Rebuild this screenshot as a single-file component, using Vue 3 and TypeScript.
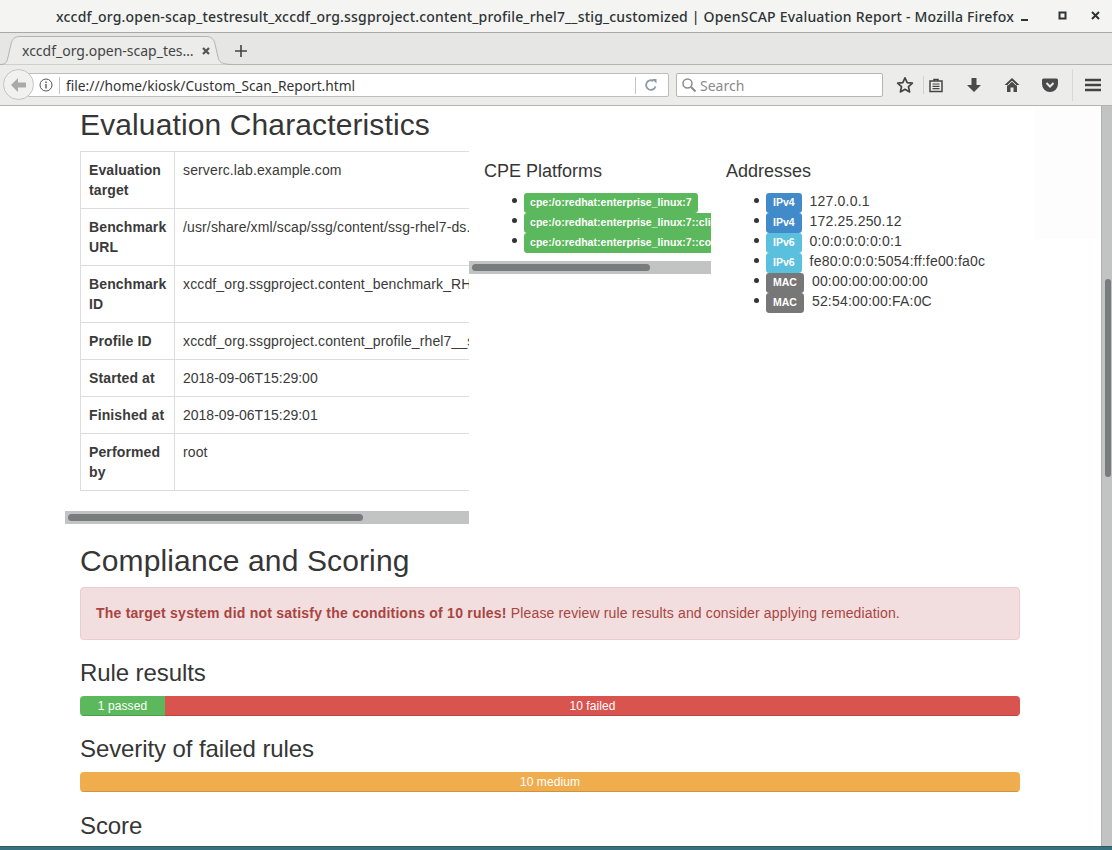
<script setup lang="ts">
interface Row { label: string; value: string; tight?: boolean }
interface Addr { kind: string; cls: string; value: string }
const rows: Row[] = [
  { label: 'Evaluation target', value: 'serverc.lab.example.com' },
  { label: 'Benchmark URL', value: '/usr/share/xml/scap/ssg/content/ssg-rhel7-ds.xml' },
  { label: 'Benchmark ID', value: 'xccdf_org.ssgproject.content_benchmark_RHEL-7' },
  { label: 'Profile ID', value: 'xccdf_org.ssgproject.content_profile_rhel7__stig_customized' },
  { label: 'Started at', value: '2018-09-06T15:29:00', tight: true },
  { label: 'Finished at', value: '2018-09-06T15:29:01', tight: true },
  { label: 'Performed by', value: 'root' },
]
const cpes: string[] = [
  'cpe:/o:redhat:enterprise_linux:7',
  'cpe:/o:redhat:enterprise_linux:7::client',
  'cpe:/o:redhat:enterprise_linux:7::computenode',
]
const addrs: Addr[] = [
  { kind: 'IPv4', cls: 'blue', value: '127.0.0.1' },
  { kind: 'IPv4', cls: 'blue', value: '172.25.250.12' },
  { kind: 'IPv6', cls: 'cyan', value: '0:0:0:0:0:0:0:1' },
  { kind: 'IPv6', cls: 'cyan', value: 'fe80:0:0:0:5054:ff:fe00:fa0c' },
  { kind: 'MAC', cls: 'gray', value: '00:00:00:00:00:00' },
  { kind: 'MAC', cls: 'gray', value: '52:54:00:00:FA:0C' },
]
</script>

<template>
  <div class="window">
    <header class="titlebar">
      <span class="title">xccdf_org.open-scap_testresult_xccdf_org.ssgproject.content_profile_rhel7__stig_customized | OpenSCAP Evaluation Report - Mozilla Firefox</span>
      <div class="winbtns">
        <svg width="12" height="12" viewBox="0 0 12 12"><rect x="2" y="9" width="7" height="2" fill="#2e3436" /></svg>
        <svg width="12" height="12" viewBox="0 0 12 12"><rect x="2.5" y="2.5" width="6" height="6" fill="none" stroke="#2e3436" stroke-width="2" /></svg>
        <svg width="12" height="12" viewBox="0 0 12 12"><path d="M2 2l7 7M9 2l-7 7" stroke="#2e3436" stroke-width="2" fill="none" /></svg>
      </div>
    </header>

    <div class="tabbar">
      <div class="tab">
        <svg class="tabshape" width="234" height="30" viewBox="0 0 234 30"><path d="M0 29.500C6 29.500 7 27 8 22L11 9C12 4 15 1.500 20 1.500H206C211 1.500 214 4 215 9L218 22C219 27 221 29.500 234 29.500" fill="#ececeb" stroke="#b3b3b0" stroke-width="1" /></svg>
        <span class="tabtext">xccdf_org.open-scap_tes…</span>
        <svg class="tabclose" width="10" height="10" viewBox="0 0 10 10"><path d="M2 2l6 6M8 2l-6 6" stroke="#555" stroke-width="2.2" fill="none" /></svg>
      </div>
      <svg class="plus" width="14" height="14" viewBox="0 0 14 14"><path d="M7 1v12M1 7h12" stroke="#444" stroke-width="1.6" fill="none" /></svg>
    </div>

    <nav class="navbar">
      <div class="back">
        <svg width="18" height="16" viewBox="0 0 18 16"><path d="M1 8l7-7v4.500h8v5H8V15z" fill="#a9abab" /></svg>
      </div>
      <div class="urlbar">
        <svg class="info" width="14" height="14" viewBox="0 0 14 14"><circle cx="7" cy="7" r="6" fill="none" stroke="#555" stroke-width="1" /><rect x="6.300" y="6" width="1.400" height="4.500" fill="#555" /><rect x="6.300" y="3.500" width="1.400" height="1.500" fill="#555" /></svg>
        <span class="sep"></span>
        <span class="url">file:///home/kiosk/Custom_Scan_Report.html</span>
        <span class="sep end"></span>
        <svg class="reload" width="14" height="14" viewBox="0 0 14 14"><path d="M11.500 8.500A4.800 4.800 0 1 1 9.500 3" fill="none" stroke="#8a9aa8" stroke-width="1.800" /><path d="M8 1h4.500v4.500z" fill="#8a9aa8" /></svg>
      </div>
      <div class="searchbar">
        <svg width="16" height="16" viewBox="0 0 16 16"><circle cx="6.500" cy="6.500" r="4.500" fill="none" stroke="#8b8b8b" stroke-width="1.500" /><path d="M10 10l4.500 4.500" stroke="#8b8b8b" stroke-width="2" /></svg>
        <span>Search</span>
      </div>
      <div class="tools">
        <svg class="t-star" width="18" height="18" viewBox="0 0 18 18"><path d="M9 1.800l2.200 4.800 5.200.6-3.900 3.500 1.100 5.200L9 13.300l-4.600 2.600 1.100-5.200L1.600 7.200l5.200-.6z" fill="none" stroke="#444" stroke-width="1.700" stroke-linejoin="round" /></svg>
        <span class="t-sep"></span>
        <svg class="t-list" width="16" height="16" viewBox="0 0 16 16"><path d="M2 4h12v10.500H2z" fill="none" stroke="#444" stroke-width="1.500" /><path d="M6 4V2.500h4V4" fill="none" stroke="#444" stroke-width="1.500" /><path d="M4.500 7h7M4.500 9.300h7M4.500 11.600h7" stroke="#444" stroke-width="1.200" /></svg>
        <svg class="t-down" width="16" height="16" viewBox="0 0 16 16"><path d="M5.500 1h5v7H15l-7 7-7-7h4.500z" fill="#4a4a4a" /></svg>
        <svg class="t-home" width="16" height="16" viewBox="0 0 16 16"><path d="M8 1L.5 8h2.500v7h3.500v-4.500h3V15H13V8h2.500z" fill="#4a4a4a" /><path d="M8 4.200L3.500 8.500M8 4.200l4.500 4.300" stroke="#e9e9e8" stroke-width="1" fill="none" /></svg>
        <svg class="t-pocket" width="18" height="16" viewBox="0 0 18 16"><path d="M2.500 1.500h13a1.500 1.500 0 0 1 1.500 1.500v4a8 8 0 0 1-16 0V3a1.500 1.500 0 0 1 1.500-1.500z" fill="#4a4a4a" /><path d="M5.500 6L9 9.500 12.500 6" fill="none" stroke="#e9e9e8" stroke-width="2" /></svg>
        <span class="t-sep2"></span>
        <svg class="t-menu" width="18" height="16" viewBox="0 0 18 16"><path d="M1 3h16M1 8h16M1 13h16" stroke="#444" stroke-width="2.400" /></svg>
      </div>
    </nav>

    <div class="viewport">
      <main class="page">
        <h2 class="h-eval">Evaluation Characteristics</h2>
        <div class="row">
          <section class="col-table">
            <div class="clip">
              <table class="info-table">
                <tbody>
                  <tr v-for="r in rows" :key="r.label">
                    <th>{{ r.label }}</th>
                    <td :class="{ tight: r.tight }">{{ r.value }}</td>
                  </tr>
                </tbody>
              </table>
            </div>
            <div class="hscroll"><div class="thumb thumb-a"></div></div>
          </section>

          <section class="col-cpe">
            <h4>CPE Platforms</h4>
            <div class="clip">
              <ul class="list cpe-list">
                <li v-for="c in cpes" :key="c"><span class="label green">{{ c }}</span></li>
              </ul>
            </div>
            <div class="hscroll"><div class="thumb thumb-b"></div></div>
          </section>

          <section class="col-addr">
            <h4>Addresses</h4>
            <ul class="list addr-list">
              <li v-for="(a, i) in addrs" :key="i">
                <span class="label" :class="a.cls">{{ a.kind }}</span>
                <span class="addr">{{ a.value }}</span>
              </li>
            </ul>
          </section>
        </div>

        <h2 class="h-comp">Compliance and Scoring</h2>
        <div class="alert"><strong>The target system did not satisfy the conditions of 10 rules!</strong> Please review rule results and consider applying remediation.</div>

        <h3>Rule results</h3>
        <div class="progress">
          <div class="bar bar-pass">1 passed</div>
          <div class="bar bar-fail">10 failed</div>
        </div>

        <h3>Severity of failed rules</h3>
        <div class="progress">
          <div class="bar bar-medium">10 medium</div>
        </div>

        <h3 class="h-score">Score</h3>
      </main>

      <div class="vscroll"><div class="vthumb"></div></div>
      <div class="ghost"></div>
    </div>
    <div class="desktop"></div>
  </div>
</template>

<style>
html, body { margin: 0; padding: 0; background: #fff; }
</style>

<style scoped>
.window {
  width: 1112px;
  height: 850px;
  display: flex;
  flex-direction: column;
  overflow: hidden;
  font-family: "Liberation Sans", Arial, sans-serif;
  color: #3a3a3a;
  background: #fff;
}
.titlebar {
  height: 33px;
  flex: none;
  box-sizing: border-box;
  border-bottom: 1px solid #a9a9a5;
  background: #f4f4f3;
  display: flex;
  align-items: center;
  padding-left: 56px;
  font-family: "Noto Sans", sans-serif;
  font-size: 14px;
  letter-spacing: .19px;
  font-weight: 500;
  color: #2e3436;
  white-space: nowrap;
  position: relative;
}
.winbtns { position: absolute; right: 0; top: 10px; display: flex; }
.winbtns svg:nth-child(1) { margin-right: 26px; }
.winbtns svg:nth-child(2) { margin-right: 21px; }
.winbtns svg:nth-child(3) { margin-right: 10px; }
.tabbar {
  height: 32px;
  flex: none;
  box-sizing: border-box;
  background: #e6e6e5;
  border-bottom: 1px solid #b3b3b0;
  display: flex;
  align-items: flex-end;
  font-family: "Noto Sans", sans-serif;
  position: relative;
}
.tab {
  width: 234px;
  height: 30px;
  margin-bottom: -1px;
  box-sizing: border-box;
  position: relative;
  display: flex;
  align-items: center;
  padding: 1px 23px 0 22px;
  justify-content: space-between;
  font-size: 14px;
  color: #444;
}
.tabshape { position: absolute; left: 0; top: 0; }
.tabtext { white-space: nowrap; position: relative; }
.tabclose { position: relative; }
.plus { margin: 0 0 6px 0; }
.navbar {
  height: 41px;
  flex: none;
  box-sizing: border-box;
  background: #ececeb;
  border-bottom: 1px solid #b3b3b0;
  display: flex;
  align-items: center;
  position: relative;
  padding-left: 28px;
  font-family: "Noto Sans", sans-serif;
}
.back {
  position: absolute;
  left: 3px;
  top: 4px;
  width: 31px;
  height: 31px;
  box-sizing: border-box;
  border: 1px solid #c4c4c2;
  border-radius: 50%;
  background: #f1f1f0;
  display: flex;
  align-items: center;
  justify-content: center;
  z-index: 1;
}
.urlbar {
  width: 641px;
  height: 24px;
  box-sizing: border-box;
  border: 1px solid #bdbdbb;
  border-radius: 0 2px 2px 0;
  background: #fff;
  display: flex;
  align-items: center;
  padding-left: 10px;
  font-size: 13.750px;
  color: #333;
}
.info { flex: none; }
.sep { width: 1px; height: 17px; background: #c5c5c5; margin: 0 6px 0 6px; flex: none; }
.url { flex: 1; white-space: nowrap; }
.sep.end { margin: 0 8px 0 0; }
.reload { margin-right: 10px; flex: none; }
.searchbar {
  width: 207px;
  height: 24px;
  margin-left: 7px;
  box-sizing: border-box;
  border: 1px solid #b5b5b3;
  border-radius: 2px;
  background: #fff;
  display: flex;
  align-items: center;
  gap: 3px;
  padding-left: 4px;
  font-size: 14px;
  color: #8a8a8a;
}
.tools { position: relative; flex: 1; height: 100%; }
.tools svg { position: absolute; top: 50%; transform: translateY(-50%); }
.t-star { left: 13px; }
.t-sep { position: absolute; left: 40px; top: 11px; width: 1px; height: 18px; background: #d2d2d0; }
.t-list { left: 45px; }
.t-down { left: 83px; }
.t-home { left: 121px; }
.t-pocket { left: 158px; }
.t-sep2 { position: absolute; left: 189px; top: 4px; width: 1px; height: 32px; background: #d8d8d6; }
.t-menu { left: 201px; }

.viewport {
  flex: 1;
  position: relative;
  overflow: hidden;
  min-height: 0;
}
.page { box-sizing: border-box; width: 1101px; padding: 0 81px 0 80px; }
h2 { font-size: 30px; font-weight: 500; line-height: 33px; margin: 0; color: #363636; letter-spacing: .12px; }
.h-eval { padding-top: 2px; }
.row { display: flex; margin: 10px -15px 0; height: 374px; }
.col-table { width: 404px; flex: none; }
.clip { overflow: hidden; }
.col-table .clip { padding-left: 15px; height: 360px; }
.info-table {
  border-collapse: collapse;
  font-size: 14px;
  line-height: 20px;
  white-space: nowrap;
}
.info-table th, .info-table td {
  border: 1px solid #ddd;
  padding: 8px;
  text-align: left;
  vertical-align: top;
  box-sizing: border-box;
  letter-spacing: .13px;
}
.info-table td.tight { letter-spacing: 0; }
.info-table th { width: 94px; min-width: 94px; max-width: 94px; white-space: normal; font-weight: 700; letter-spacing: .12px; }
.hscroll { height: 13px; background: #c2c4c3; padding: 3px 3px; box-sizing: border-box; }
.thumb { height: 7px; border-radius: 4px; background: #797c7c; }
.thumb-a { width: 295px; }
.thumb-b { width: 178px; }
.col-cpe { width: 242px; flex: none; padding-top: 10px; box-sizing: border-box; }
.col-cpe h4 { padding-left: 15px; }
.col-cpe .clip { height: 80px; }
h4 { font-size: 18px; font-weight: 500; line-height: 20px; margin: 0; color: #363636; }
.list { margin: 0; padding: 0 0 0 40px; font-size: 14px; line-height: 20px; list-style: none; }
.list li { height: 20px; white-space: nowrap; position: relative; }
.list li::before {
  content: "";
  position: absolute;
  left: -12px;
  top: 7px;
  width: 5px;
  height: 5px;
  border-radius: 50%;
  background: #333;
}
.cpe-list { padding-left: 55px; padding-top: 10px; width: 400px; }
.col-addr { padding: 10px 0 0 15px; }
.addr-list { margin-top: 10px; }
.label {
  display: inline-block;
  box-sizing: border-box;
  font-size: 10.500px;
  font-weight: 700;
  line-height: 10.500px;
  color: #fff;
  border-radius: 3.150px;
  white-space: nowrap;
  vertical-align: baseline;
}
.addr-list .label { padding: 4px 7px 5.500px 7px; margin-right: 8px; }
.cpe-list .label { padding: 4px 6px 5.500px; letter-spacing: .04px; }
.addr { font-size: 14px; letter-spacing: .19px; }
.green { background: #5cb85c; }
.blue { background: #428bca; }
.cyan { background: #5bc0de; }
.gray { background: #777; }
.h-comp { margin-top: 19px; }
.alert {
  margin-top: 10px;
  height: 53px;
  box-sizing: border-box;
  padding: 15px;
  background: #f2dede;
  border: 1px solid #ebccd1;
  border-radius: 4px;
  color: #a94442;
  font-size: 14px;
  line-height: 20px;
  white-space: nowrap;
  letter-spacing: .14px;
}
.alert strong { letter-spacing: .23px; }
h3 { font-size: 24px; font-weight: 500; line-height: 26px; margin: 20px 0 10px; color: #363636; letter-spacing: -.09px; }
.h-score { margin-top: 21px; }
.progress {
  height: 20px;
  display: flex;
  overflow: hidden;
  border-radius: 4px;
  font-size: 12px;
  line-height: 20px;
  color: #fff;
  text-align: center;
  letter-spacing: .08px;
}
.bar { box-shadow: inset 0 -1px 0 rgba(0,0,0,.15); }
.bar-pass { width: 85px; background: #5cb85c; flex: none; }
.bar-fail { flex: 1; background: #d9534f; }
.bar-medium { flex: 1; background: #f0ad4e; }
.vscroll {
  position: absolute;
  top: 0;
  right: 0;
  width: 11px;
  height: 100%;
  box-sizing: border-box;
  background: #c2c4c3;
  border-left: 1px solid #b0b2b1;
}
.vthumb {
  position: absolute;
  left: 3px;
  top: 173px;
  width: 6px;
  height: 198px;
  border-radius: 3px;
  background: #797c7c;
}
.ghost {
  position: absolute;
  left: 1035px;
  top: 0;
  width: 66px;
  height: 133px;
  background: #fdfdfd;
}
.desktop { height: 4px; flex: none; background: #37707f; border-top: 1px solid #2b5c6a; box-sizing: border-box; }
</style>
